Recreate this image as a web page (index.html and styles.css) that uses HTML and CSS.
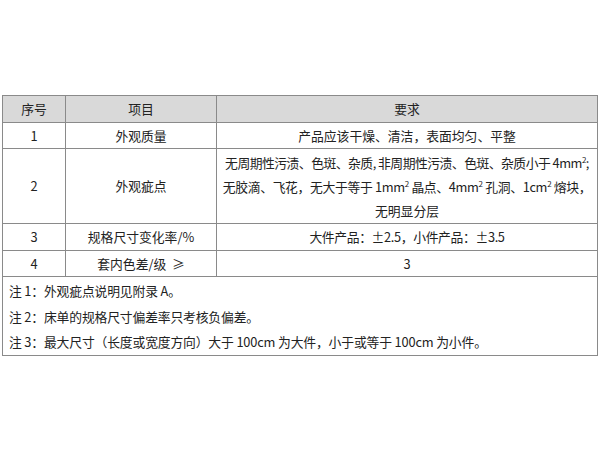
FILE: index.html
```html
<!DOCTYPE html>
<html lang="zh">
<head>
<meta charset="utf-8">
<link rel="stylesheet" href="styles.css">
</head>
<body>
<div class="page">
<table class="spec">
  <colgroup>
    <col class="c1"><col class="c2"><col class="c3">
  </colgroup>
  <thead>
    <tr class="r-head"><th>序号</th><th>项目</th><th>要求</th></tr>
  </thead>
  <tbody>
    <tr class="r1"><td>1</td><td>外观质量</td><td>产品应该干燥、清洁，表面均匀、平整</td></tr>
    <tr class="r2"><td>2</td><td>外观疵点</td><td class="multi"><span class="ln ln1">无周期性污渍、色斑、杂质, 非周期性污渍、色斑、杂质小于 4mm<sup>2</sup>;</span><span class="ln ln2">无胶滴、飞花，无大于等于 1mm<sup>2</sup> 晶点、4mm<sup>2</sup> 孔洞、1cm<sup>2</sup> 熔块，</span><span class="ln">无明显分层</span></td></tr>
    <tr class="r3"><td>3</td><td>规格尺寸变化率/%</td><td class="tight">大件产品：±2.5，小件产品：±3.5</td></tr>
    <tr class="r4"><td>4</td><td>套内色差/级 &nbsp;≥</td><td>3</td></tr>
    <tr class="notes"><td colspan="3">
      <p>注 1：外观疵点说明见附录 A。</p>
      <p>注 2：床单的规格尺寸偏差率只考核负偏差。</p>
      <p>注 3：最大尺寸（长度或宽度方向）大于 100cm 为大件，小于或等于 100cm 为小件。</p>
    </td></tr>
  </tbody>
</table>
</div>
</body>
</html>
```

FILE: styles.css
```css
html, body {
  margin: 0;
  padding: 0;
  background: #ffffff;
}
.page {
  padding: 95px 0 0 2px;
}
.spec {
  border-collapse: collapse;
  width: 595px;
  table-layout: fixed;
  font-family: "Noto Sans CJK SC", "Noto Sans", sans-serif;
  font-size: 12.8px;
  color: #222222;
}
.c1 { width: 63px; }
.c2 { width: 151px; }
.c3 { width: 381px; }
.spec th, .spec td {
  border: 1px solid #8a8a8a;
  text-align: center;
  vertical-align: middle;
  padding: 0;
  line-height: 20px;
  font-weight: normal;
  white-space: nowrap;
}
.spec th {
  background: #d9d9d9;
}
.r-head { height: 27px; }
.r1 { height: 26px; }
.r2 { height: 75px; }
.r3 { height: 27px; }
.r4 { height: 26px; }
.spec td.multi {
  line-height: 24px;
  vertical-align: top;
  padding-top: 2px;
}
.ln {
  display: block;
}
.ln1 {
  letter-spacing: -0.5px;
}
.ln2 {
  letter-spacing: -0.33px;
}
.tight {
  letter-spacing: -0.35px;
}
sup {
  font-size: 8px;
  line-height: 0;
  vertical-align: 5px;
}
.notes td {
  text-align: left;
  padding: 1px 6px 0 6px;
  height: 75px;
}
.notes p {
  margin: 0;
  line-height: 25.5px;
  letter-spacing: -0.15px;
}
```
